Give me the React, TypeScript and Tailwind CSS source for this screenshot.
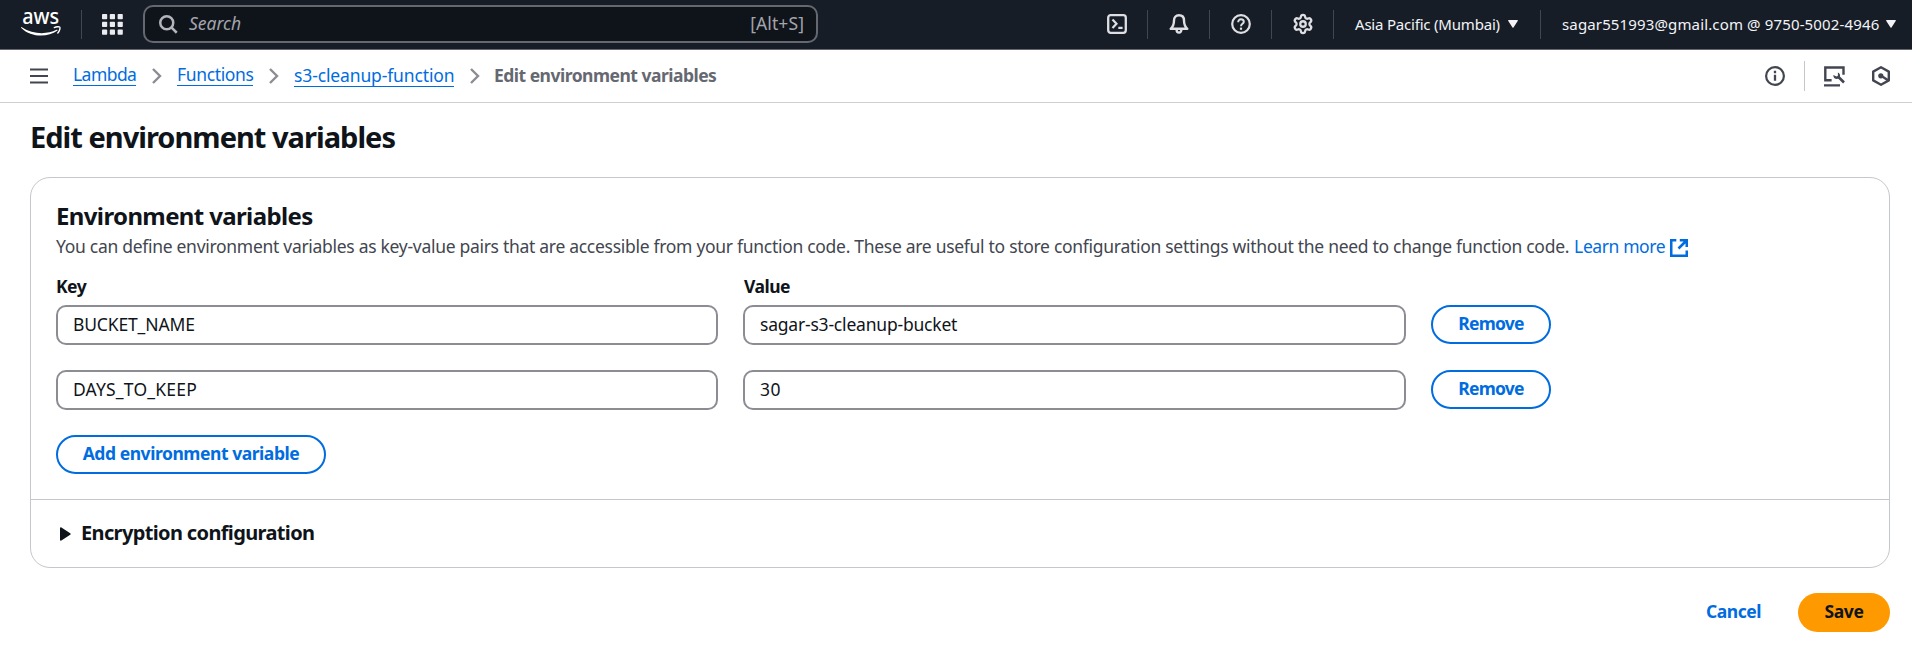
import React from "react";
import { Settings } from "lucide-react";

type IconProps = { className?: string };

const AwsLogo = () => (
  <svg className="h-[26px] w-10 shrink-0 overflow-visible" viewBox="0 0 40 26" fill="none">
    <text x="1.2" y="13" textLength="37" lengthAdjust="spacingAndGlyphs" fill="#fff" fontFamily="Noto Sans, sans-serif" fontSize="22" fontWeight="500">aws</text>
    <path d="M.8 16.2C12 23.6 26 23.6 35.500 18.800c.8-.4 1.4.4.7 1C27 26.400 10 26.600 .3 16.900c-.5-.6-.1-1.100.5-.7Z" fill="#fff" />
    <path d="M33.300 16.600c2-1 5-1.100 5.500-.5s0 3.800-2 5.800" stroke="#fff" strokeWidth="1.4" strokeLinecap="round" />
  </svg>
);

const GridIcon = () => (
  <svg className="size-[21px] shrink-0" viewBox="0 0 21 21" fill="#ebebf0">
    {[0, 7.8, 15.6].map((y) => [0, 7.8, 15.6].map((x) => <rect key={`${x}-${y}`} x={x} y={y} width="5.2" height="5.2" rx=".8" />))}
  </svg>
);

const SearchIcon = () => (
  <svg className="size-5 shrink-0" viewBox="0 0 16 16" fill="none" stroke="#b4b4bb" strokeWidth="2">
    <circle cx="7" cy="7" r="5.2" />
    <path d="m10.500 10.500 4.500 4.500" />
  </svg>
);

const TerminalIcon = () => (
  <svg className="size-5 shrink-0" viewBox="0 0 20 20" fill="none" stroke="#dedee3" strokeWidth="2.3">
    <rect x="1.2" y="1.2" width="17.6" height="17.6" rx="2.5" />
    <path d="m5.500 5.500 4 4.300-4 4.300M11.300 13.900h4.300" strokeWidth="2.2" />
  </svg>
);

const BellIcon = () => (
  <svg className="size-5 shrink-0" viewBox="0 0 20 20" fill="none" stroke="#dedee3" strokeWidth="2.4" strokeLinejoin="round">
    <path d="M10 1.300c-3.300 0-5 2.300-5 5.200 0 4.300-1.100 6.200-3.300 8.300h16.600C16.100 12.700 15 10.800 15 6.500c0-2.900-1.700-5.200-5-5.200Z" />
    <path d="M7.600 15.500c0 1.800 1 3.100 2.400 3.100s2.400-1.300 2.400-3.100" />
  </svg>
);

const HelpIcon = () => (
  <svg className="size-5 shrink-0" viewBox="0 0 20 20" fill="none" stroke="#dedee3" strokeWidth="2.2">
    <circle cx="10" cy="10" r="8.8" />
    <path d="M7.200 8.200C7.200 6.400 8.300 5.300 10 5.300s2.800 1 2.800 2.500c0 2-2.800 2.100-2.800 4.400" strokeWidth="2" />
    <path d="M10 13.600v2.200" />
  </svg>
);

const CaretDown = () => (
  <svg className="h-2 w-[10px] shrink-0" viewBox="0 0 10 8" fill="#f3f3f7">
    <path d="M.8 0h8.400c.6 0 .8.500.5.9L5.500 7.500c-.3.400-.7.400-1 0L.3.900C0 .5.200 0 .8 0Z" />
  </svg>
);

const MenuIcon = () => (
  <svg className="h-4 w-[18px] shrink-0" viewBox="0 0 18 16" stroke="#424650" strokeWidth="2.2">
    <path d="M0 1.500h18M0 8h18M0 14.500h18" />
  </svg>
);

const Chevron = ({ className = "" }: IconProps) => (
  <svg className={`h-4 w-[10px] shrink-0 ${className}`} viewBox="0 0 10 16" fill="none" stroke="#8c8c94" strokeWidth="2.4">
    <path d="m1 1 7 7-7 7" />
  </svg>
);

const InfoIcon = () => (
  <svg className="size-5 shrink-0" viewBox="0 0 20 20" fill="none" stroke="#424650" strokeWidth="2.2">
    <circle cx="10" cy="10" r="8.9" />
    <path d="M10 4.800v2.400M10 8.700v6.100" strokeWidth="2.3" />
  </svg>
);

const WorkbenchIcon = () => (
  <svg className="size-[21px] shrink-0" viewBox="0 0 21 21" fill="none" stroke="#424650" strokeWidth="2.4">
    <path d="M7.600 14.200H1.300V1.500h18.200v7.300M0 19.400h16" />
    <path d="m14 10.500 6 6" strokeWidth="2.6" />
    <path d="M9.300 9c-.2 3 2.700 4.900 5.200 3.600 2.300-1.300 2.100-5-.6-6.100v3.200l-1.300.9Z" fill="#424650" stroke="none" />
  </svg>
);

const HexIcon = () => (
  <svg className="h-5 w-[18px] shrink-0" viewBox="0 0 18 20" fill="none" stroke="#424650" strokeWidth="2.4" strokeLinejoin="round">
    <path d="m9 1.300 7.800 4.300v8.800L9 18.700l-7.800-4.300V5.600Z" />
    <circle cx="8.8" cy="9.8" r="2.6" fill="#424650" stroke="none" />
    <path d="m9 9.800 7.500 4.700" />
  </svg>
);

const ExternalIcon = () => (
  <svg className="size-[18px] shrink-0" viewBox="0 0 18 18" fill="none" stroke="#006ce0" strokeWidth="2.5">
    <path d="M6.300 1.250H1.250v15.500h15.500v-5.200M9.800 1.250h6.950V8M16.500 1.500 8.500 9.500" />
  </svg>
);

const Divider = ({ className = "" }: IconProps) => <div className={`h-[29px] w-px shrink-0 bg-[#424650] ${className}`} />;

const TextField = ({ value, className = "" }: { value: string; className?: string }) => (
  <input
    readOnly
    defaultValue={value}
    className={`block h-10 w-full rounded-[10px] border-2 border-[#8c8c94] bg-white px-[15px] pb-[2px] text-[17.5px] text-[#0f141a] outline-none ${className}`}
  />
);

const OutlineButton = ({ children, className = "" }: { children: React.ReactNode; className?: string }) => (
  <button className={`flex h-[39px] items-center justify-center rounded-full border-2 border-[#006ce0] pb-px text-[17.5px] leading-none font-bold text-[#006ce0] ${className}`}>
    {children}
  </button>
);

const Crumb = ({ children, className = "" }: { children: React.ReactNode; className?: string }) => (
  <a className={`block border-b border-[#006ce0] pb-[2px] leading-[18px] whitespace-nowrap ${className}`}>{children}</a>
);

export default function App() {
  return (
    <div className="h-[648px] w-[1912px] overflow-hidden bg-white font-['Noto_Sans',sans-serif] text-[17.5px] text-[#0f141a]">
      <header className="flex h-[50px] items-center border-b border-[#656871] bg-[#161d26] pb-px pl-[21px] text-[#f3f3f7]">
        <AwsLogo />
        <Divider className="ml-5" />
        <div className="ml-5">
          <GridIcon />
        </div>
        <div className="ml-5 flex h-[38px] w-[675px] items-center rounded-[10px] border-2 border-[#656871] bg-[#0f141a] pr-[12px] pl-[13px]">
          <SearchIcon />
          <span className="mb-px ml-[11px] text-[#a4a4ad] italic">Search</span>
          <span className="mb-px ml-auto tracking-[0.1px] text-[#a4a4ad]">[Alt+S]</span>
        </div>
        <div className="ml-[289px] flex items-center">
          <TerminalIcon />
          <Divider className="ml-5" />
          <div className="ml-[21px]"><BellIcon /></div>
          <Divider className="ml-5" />
          <div className="ml-[21px]"><HelpIcon /></div>
          <Divider className="ml-5" />
          <Settings className="ml-5 size-[22px] shrink-0 text-[#dedee3]" strokeWidth={2.5} />
          <Divider className="ml-[19px]" />
        </div>
        <div className="ml-[21px] flex w-[163px] items-center justify-between text-[15px]">
          <span className="mt-px tracking-[-0.2px]">Asia Pacific (Mumbai)</span>
          <CaretDown />
        </div>
        <Divider className="ml-[22px]" />
        <div className="ml-[21px] flex w-[334px] items-center justify-between text-[15px]">
          <span className="mt-px tracking-[0.14px]">sagar551993@gmail.com @ 9750-5002-4946</span>
          <CaretDown />
        </div>
      </header>

      <nav className="flex h-[53px] items-center border-b border-[#d0d0d4] pl-[30px] text-[#006ce0]">
        <MenuIcon />
        <Crumb className="mb-[2px] ml-[25px] w-[63px] tracking-[-0.55px]">Lambda</Crumb>
        <Chevron className="ml-4" />
        <Crumb className="mb-[2px] ml-[15px] w-[76px] tracking-[-0.35px]">Functions</Crumb>
        <Chevron className="ml-4" />
        <Crumb className="ml-[15px] w-[160px] tracking-[-0.13px]">s3-cleanup-function</Crumb>
        <Chevron className="ml-4" />
        <span className="mb-[2px] ml-[14px] font-bold tracking-[-0.51px] text-[#656871]">Edit environment variables</span>
        <div className="ml-auto flex items-center pr-[22px]">
          <InfoIcon />
          <div className="mx-[19px] h-[30px] w-px bg-[#c6c6cd]" />
          <WorkbenchIcon />
          <div className="ml-[27px]"><HexIcon /></div>
        </div>
      </nav>

      <main className="pr-[22px] pl-[30px]">
        <h1 className="pt-[15px] text-[29px] leading-[38px] font-bold tracking-[-0.98px]">Edit environment variables</h1>
        <section className="mt-[21px] h-[391px] rounded-[20px] border border-[#c6c6cd]">
          <div className="h-[322px] border-b border-[#c6c6cd] px-[25px] pt-[23px]">
            <h2 className="text-[24px] leading-[30px] font-bold tracking-[-0.63px]">Environment variables</h2>
            <p className="mt-[3px] flex h-6 items-center text-[#424650]">
              <span className="tracking-[-0.295px]">You can define environment variables as key-value pairs that are accessible from your function code. These are useful to store configuration settings without the need to change function code.</span>
              <a className="ml-[5px] flex items-center gap-[5px] tracking-[-0.4px] text-[#006ce0]">
                Learn more
                <span className="mt-[3px]"><ExternalIcon /></span>
              </a>
            </p>
            <div className="mt-4 grid grid-cols-[662px_663px] gap-x-[25px] font-bold">
              <div className="h-[31px] leading-6 tracking-[-0.5px]">Key</div>
              <div className="h-[31px] pl-px leading-6 tracking-[-0.5px]">Value</div>
            </div>
            <div className="grid grid-cols-[662px_663px_120px] gap-x-[25px] gap-y-[25px]">
              <TextField value="BUCKET_NAME" className="tracking-[-0.15px]" />
              <TextField value="sagar-s3-cleanup-bucket" className="tracking-[-0.2px]" />
              <OutlineButton className="tracking-[-0.75px]">Remove</OutlineButton>
              <TextField value="DAYS_TO_KEEP" className="tracking-[0.2px]" />
              <TextField value="30" className="tracking-[0.5px]" />
              <OutlineButton className="tracking-[-0.75px]">Remove</OutlineButton>
            </div>
            <OutlineButton className="mt-[25px] w-[270px] tracking-[-0.45px]">Add environment variable</OutlineButton>
          </div>
          <div className="flex h-[67px] items-center pl-[29px] text-[20px] font-bold">
            <svg className="h-[14px] w-[11px]" viewBox="0 0 11 14" fill="#0f141a">
              <path d="M0 1.300C0 .4.800 0 1.400.5l8.800 5.700c.6.400.6 1.100 0 1.500l-8.800 5.800C.8 13.900 0 13.500 0 12.700Z" />
            </svg>
            <span className="mb-[2px] ml-[10px] tracking-[-0.64px]">Encryption configuration</span>
          </div>
        </section>
        <div className="mt-[25px] flex items-center justify-end font-bold">
          <button className="mr-[37px] pb-[2px] tracking-[-0.45px] text-[#006ce0]">Cancel</button>
          <button className="h-[39px] w-[92px] rounded-full bg-[#ff9900] pb-[2px] tracking-[-0.4px]">Save</button>
        </div>
      </main>
    </div>
  );
}
